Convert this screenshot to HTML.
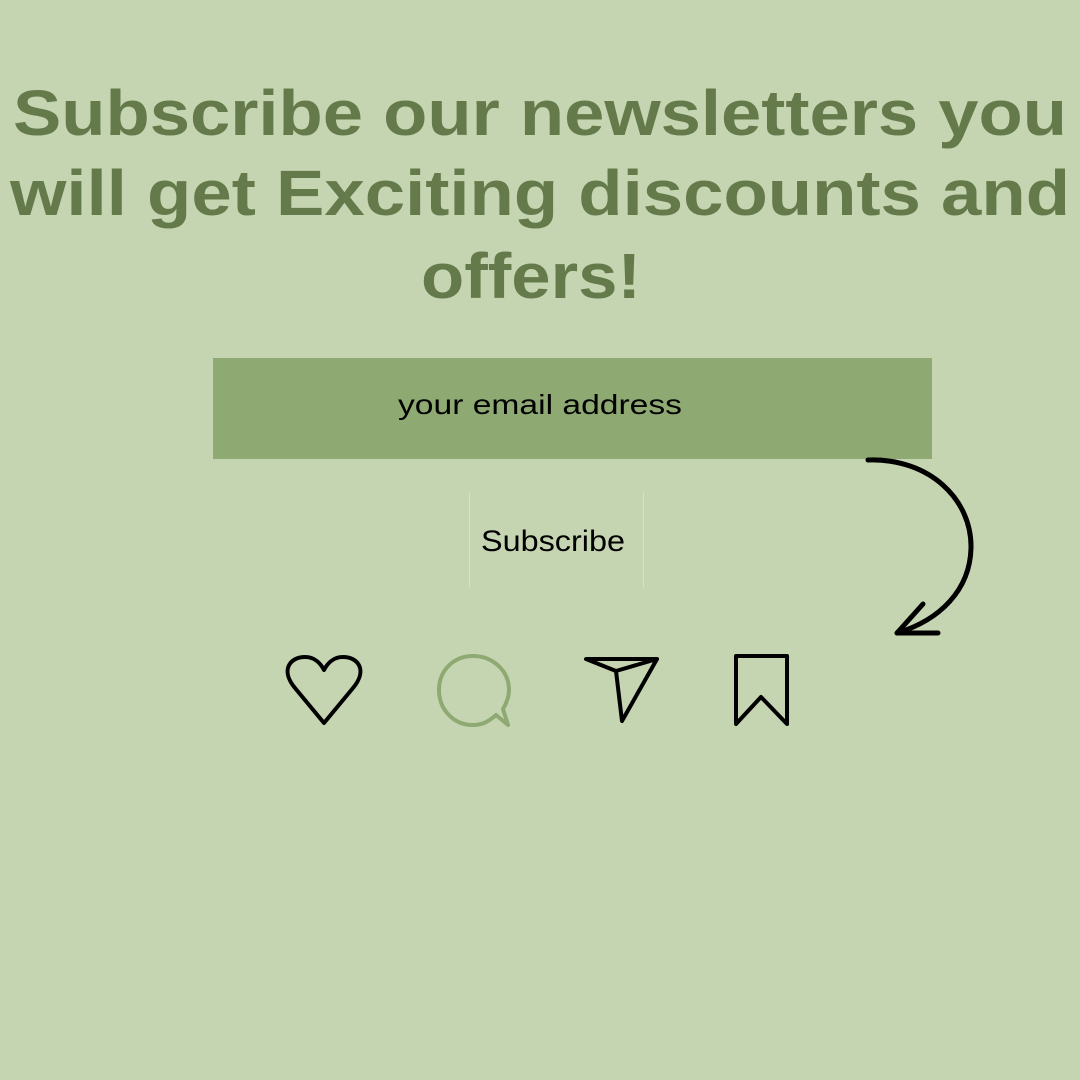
<!DOCTYPE html>
<html><head><meta charset="utf-8"><style>
html,body{margin:0;padding:0}
body{width:1080px;height:1080px;background:#c6d5b1;position:relative;overflow:hidden;font-family:"Liberation Sans",sans-serif}
</style></head><body>
<svg width="1080" height="1080" style="position:absolute;left:0;top:0">
<g fill="#657a4b" font-family="Liberation Sans, sans-serif" font-weight="bold" font-size="64">
<text x="13" y="135" textLength="1054" lengthAdjust="spacingAndGlyphs">Subscribe our newsletters you</text>
<text x="10" y="215" textLength="1060" lengthAdjust="spacingAndGlyphs">will get Exciting discounts and</text>
<text x="421" y="298" textLength="220" lengthAdjust="spacingAndGlyphs">offers!</text>
</g>
<rect x="213" y="358" width="719" height="101" fill="#8fa973"/>
<text x="398" y="414" font-size="28" fill="#000" textLength="284" lengthAdjust="spacingAndGlyphs" font-family="Liberation Sans, sans-serif">your email address</text>
<line x1="469.5" y1="492" x2="469.5" y2="587" stroke="#dcdcdc" stroke-width="1"/>
<line x1="643.5" y1="492" x2="643.5" y2="587" stroke="#dcdcdc" stroke-width="1"/>
<text x="481" y="551" font-size="30" fill="#000" textLength="144" lengthAdjust="spacingAndGlyphs" font-family="Liberation Sans, sans-serif">Subscribe</text>
<g fill="none" stroke="#000" stroke-width="5" stroke-linecap="round" stroke-linejoin="round">
<path d="M868 460 C930 458 972 500 971 548 C970 590 940 620 897 633"/>
<path d="M923 604 L897 633 L938 633"/>
<path d="M324 723 L295 688 C280 670 290 657 305 657 C315 657 321 664 324 670 C327 664 333 657 343 657 C358 657 368 670 353 688 Z" stroke-width="4"/>
<path d="M586 659 L657 659 L622 721 L616 671 Z M616 671 L657 659" stroke-width="4"/>
<path d="M736 656 L787 656 L787 724 L761 697 L736 724 Z" stroke-width="4"/>
</g>
<path d="M496 715 C488 722 482 725 473 725 C453 725 439 709 439 690 C439 670 454 656 473 656 C492 656 509 670 509 690 C509 698 506 704 503 709 L508 725 Z" fill="none" stroke="#8fa973" stroke-width="4" stroke-linejoin="round"/>
</svg>
</body></html>
